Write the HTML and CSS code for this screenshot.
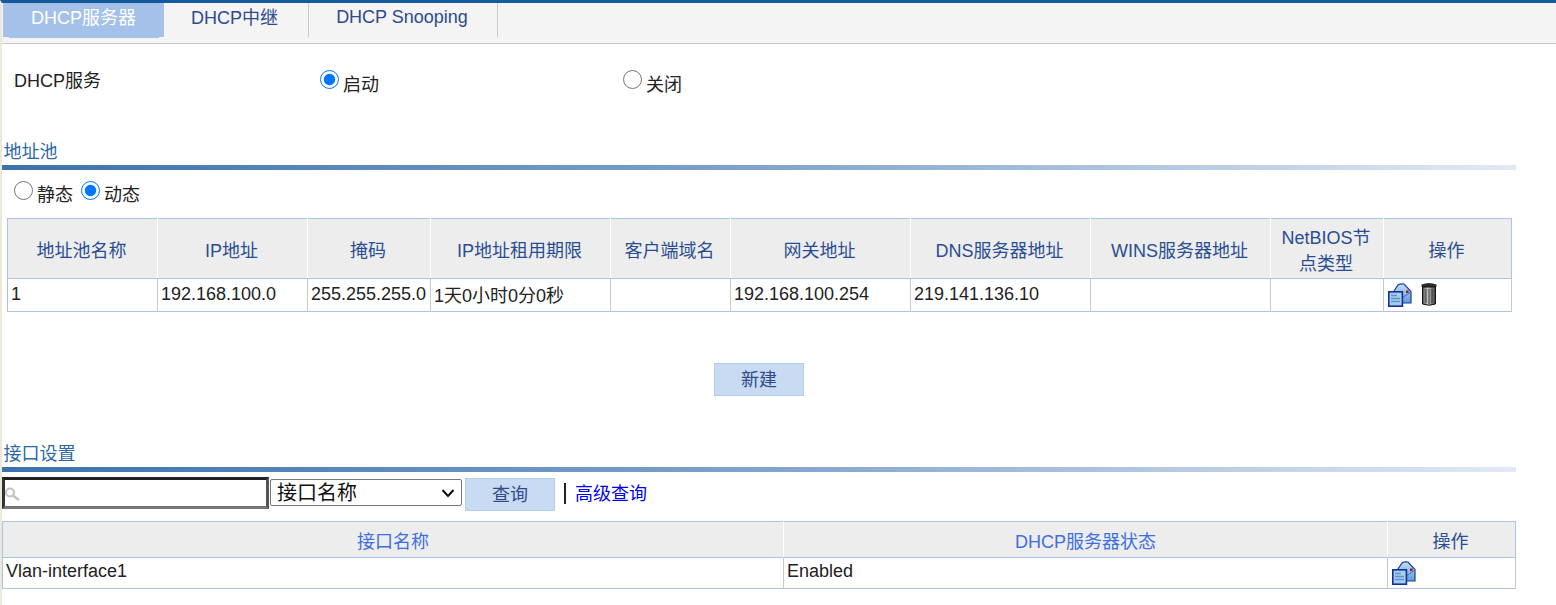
FILE: index.html
```html
<!DOCTYPE html>
<html lang="zh">
<head>
<meta charset="utf-8">
<title>DHCP</title>
<link rel="stylesheet" href="styles.css">
</head>
<body>
<svg class="defs" width="0" height="0" aria-hidden="true">
  <defs>
    <linearGradient id="roof" x1="0" y1="0" x2="0" y2="1">
      <stop offset="0" stop-color="#c4def5"/>
      <stop offset="1" stop-color="#5f9ad6"/>
    </linearGradient>
    <linearGradient id="can" x1="0" y1="0" x2="1" y2="0">
      <stop offset="0" stop-color="#4a4a4a"/>
      <stop offset="0.4" stop-color="#c8c8c8"/>
      <stop offset="1" stop-color="#3a3a3a"/>
    </linearGradient>
    <symbol id="edit" viewBox="0 0 24 24">
      <path d="M5 9.5 L10 2 Q12 0.5 16 1 L23 8.5 V20 H8 Z" fill="url(#roof)" stroke="#1c3f9a" stroke-width="1.2"/>
      <path d="M6 10 L14 15 L23 9" fill="none" stroke="#3f77bd" stroke-width="1"/>
      <rect x="18" y="7.5" width="2.6" height="2.6" fill="#a3162a"/>
      <rect x="0.8" y="8.8" width="13.6" height="14.4" fill="#a9cdef" stroke="#12308f" stroke-width="1.6"/>
      <path d="M3 12.5 H9 M3 15.5 H12 M3 18.5 H12" stroke="#5d94d0" stroke-width="1.3"/>
    </symbol>
    <symbol id="trash" viewBox="0 0 16 24">
      <path d="M0.5 2.5 Q8 -0.5 15.5 2.5 V5 H0.5 Z" fill="#2c2c2c"/>
      <path d="M1.5 5 H14.5 V22 Q8 24.5 1.5 22 Z" fill="url(#can)" stroke="#111" stroke-width="1"/>
      <path d="M5 7 V21 M8 7 V22 M11 7 V21" stroke="#333" stroke-width="0.9"/>
    </symbol>
  </defs>
</svg>
<div class="page">
  <nav class="tabs">
    <a class="tab tab-active">DHCP服务器</a>
    <a class="tab tab-relay">DHCP中继</a>
    <a class="tab tab-snoop">DHCP Snooping</a>
  </nav>

  <div class="service">
    <span class="service-name">DHCP服务</span>
    <label class="opt opt-on"><input type="radio" name="svc" checked><span>启动</span></label>
    <label class="opt opt-off"><input type="radio" name="svc"><span>关闭</span></label>
  </div>

  <h2 class="section">地址池</h2>
  <div class="rule"></div>
  <div class="pool-type">
    <label class="opt"><input type="radio" name="pool"><span>静态</span></label>
    <label class="opt"><input type="radio" name="pool" checked><span>动态</span></label>
  </div>

  <table class="grid grid-pool">
    <colgroup>
      <col class="c150"><col class="c150"><col class="c123"><col class="c180"><col class="c120"><col class="c180"><col class="c180"><col class="c180"><col class="c113"><col>
    </colgroup>
    <thead>
      <tr>
        <th>地址池名称</th><th>IP地址</th><th>掩码</th><th>IP地址租用期限</th><th>客户端域名</th><th>网关地址</th><th>DNS服务器地址</th><th>WINS服务器地址</th><th>NetBIOS节点类型</th><th>操作</th>
      </tr>
    </thead>
    <tbody>
      <tr>
        <td>1</td><td>192.168.100.0</td><td>255.255.255.0</td><td class="lease">1天0小时0分0秒</td><td></td><td>192.168.100.254</td><td>219.141.136.10</td><td></td><td></td>
        <td class="actions"><svg class="ico"><use href="#edit"/></svg><svg class="ico-trash"><use href="#trash"/></svg></td>
      </tr>
    </tbody>
  </table>

  <div class="new-row"><button class="btn btn-new" type="button">新建</button></div>

  <h2 class="section section-if">接口设置</h2>
  <div class="rule"></div>
  <div class="search">
    <span class="search-box">
      <svg class="search-ico" viewBox="0 0 16 14" preserveAspectRatio="none"><circle cx="6" cy="5.5" r="4" fill="none" stroke="#c2c2c2" stroke-width="2"/><path d="M9 8.5 L15 13" stroke="#c2c2c2" stroke-width="2.4"/></svg>
      <input class="search-input" type="text">
    </span>
    <select class="search-select"><option>接口名称</option></select>
    <button class="btn btn-query" type="button">查询</button>
    <span class="sep"></span>
    <a class="adv">高级查询</a>
  </div>

  <table class="grid grid-if">
    <colgroup><col class="c781"><col class="c604"><col></colgroup>
    <thead>
      <tr><th class="th-light">接口名称</th><th class="th-light">DHCP服务器状态</th><th>操作</th></tr>
    </thead>
    <tbody>
      <tr><td>Vlan-interface1</td><td>Enabled</td><td class="actions"><svg class="ico"><use href="#edit"/></svg></td></tr>
    </tbody>
  </table>
</div>
</body>
</html>
```
FILE: styles.css
```css
* { box-sizing: border-box; }
html, body { margin: 0; padding: 0; height: 100%; }
body {
  background: #fff;
  color: #222;
  font: 18px/24px "Liberation Sans", "Noto Sans CJK SC", sans-serif;
  overflow: hidden;
}
.defs { position: absolute; }
.page {
  height: 605px;
  border-top: 3px solid #155a9c;
  border-left: 2px solid #ece9dc;
}

.tabs {
  display: flex;
  height: 41px;
  padding-left: 1px;
  background: #f4f4f4;
  border-bottom: 1px solid #c9c9c9;
}
.tab {
  height: 34px;
  color: #2e4a8b;
  text-align: center;
  border-right: 1px solid #c9c9c9;
}
.tab-active {
  position: relative;
  width: 161px;
  line-height: 30px;
  color: #fff;
  background: #a3c1e9;
  border-right: 0;
}
.tab-active::after {
  content: "";
  position: absolute;
  left: 6px;
  right: 5px;
  bottom: -1px;
  height: 1px;
  background: #a3c1e9;
}
.tab-relay { width: 145px; line-height: 30px; padding-right: 3px; }
.tab-snoop { width: 189px; line-height: 29px; padding-right: 2px; }

.service {
  display: flex;
  height: 97px;
  padding: 25px 0 0 12px;
}
.service-name { width: 306px; }
.opt { display: inline-flex; align-items: center; height: 24px; }
.opt input {
  width: 19px;
  height: 19px;
  margin: 0;
  position: relative;
  top: -3px;
}
.opt span { margin-left: 4px; position: relative; top: 2px; }
.opt-on { width: 303px; }
.service .opt span { top: 4px; }
.service .opt input { top: -2px; }

.section {
  margin: 0 0 0 1.5px;
  height: 24px;
  font-size: 18px;
  font-weight: normal;
  line-height: 22px;
  color: #2c68a8;
}
.section-if { margin-top: 47px; }
.rule {
  width: 1514px;
  height: 5px;
  background: linear-gradient(90deg, #3a72ac 0%, #7fa3cc 50%, #e2e9f4 100%);
}

.pool-type {
  display: flex;
  gap: 8px;
  height: 48px;
  padding: 11px 0 0 12px;
}

.grid {
  table-layout: fixed;
  border-collapse: collapse;
  border: 1px solid #a9c4e8;
  background: #fff;
}
.grid-pool { width: 1505px; margin-left: 5px; }
.grid-if { width: 1514px; margin-top: 10px; }
.grid th {
  padding: 4px 8px 0 6px;
  font-weight: normal;
  line-height: 26px;
  color: #2a4d92;
  background: #ededed;
  border-right: 1px solid #fff;
  border-bottom: 1px solid #a9c4e8;
}
.grid th:last-child { border-right: 1px solid #a9c4e8; }
.grid td {
  padding: 0 3px 2px;
  white-space: nowrap;
  overflow: hidden;
  border-right: 1px solid #c9c9c9;
}
.grid-if td { padding-bottom: 5px; }
.grid .lease { padding: 2px 3px 0; }
.grid-pool thead tr { height: 60px; }
.grid-pool tbody tr { height: 33px; }
.grid-if thead tr { height: 36px; }
.grid-if tbody tr { height: 31px; }
.grid .th-light { color: #3d6fe0; padding-left: 7px; padding-right: 7px; }
.c150 { width: 150px; }
.c123 { width: 123px; }
.c180 { width: 180px; }
.c120 { width: 120px; }
.c113 { width: 113px; }
.c781 { width: 781px; }
.c604 { width: 604px; }

.grid .actions { padding: 0 4px; font-size: 0; line-height: 0; }
.ico { display: inline-block; width: 24px; height: 24px; vertical-align: top; }
.ico-trash { display: inline-block; width: 16px; height: 24px; margin: -1px 0 0 9px; vertical-align: top; }

.new-row {
  display: flex;
  justify-content: center;
  width: 1504px;
  margin: 51px 0 0 5px;
}
.btn {
  padding: 0;
  font: inherit;
  color: #2e4a8b;
  background: #c9daf3;
  border: 1px solid #b5cdec;
}
.btn-new { width: 90px; height: 33px; }
.btn-query { width: 90px; height: 33px; margin: 1px 0 0 3px; }

.search {
  display: flex;
  align-items: flex-start;
  height: 34px;
  margin-top: 5px;
}
.search-box {
  display: flex;
  position: relative;
  width: 267px;
  height: 32px;
}
.search-ico {
  position: absolute;
  left: 2px;
  top: 10px;
  width: 16px;
  height: 14px;
}
.search-input {
  width: 100%;
  height: 100%;
  padding: 0 0 0 20px;
  background: transparent;
  border: 3px solid;
  border-color: #222 #555 #777 #333;
  outline: 0;
}
.search-select {
  appearance: none;
  width: 192px;
  height: 27px;
  margin: 2px 0 0 1px;
  padding-left: 6px;
  font: 20px/24px "Liberation Sans", "Noto Sans CJK SC", sans-serif;
  color: #111;
  background: #fff url("data:image/svg+xml,%3Csvg xmlns='http://www.w3.org/2000/svg' width='14' height='10'%3E%3Cpath d='M1.5 2 L7 8 L12.5 2' fill='none' stroke='%23111' stroke-width='2'/%3E%3C/svg%3E") no-repeat right 6px center;
  border: 1px solid #767676;
  border-radius: 2px;
}
.sep {
  width: 2px;
  height: 21px;
  margin: 6px 9px 0;
  background: #222;
}
.adv { margin-top: 5px; color: #0000ee; }
```
